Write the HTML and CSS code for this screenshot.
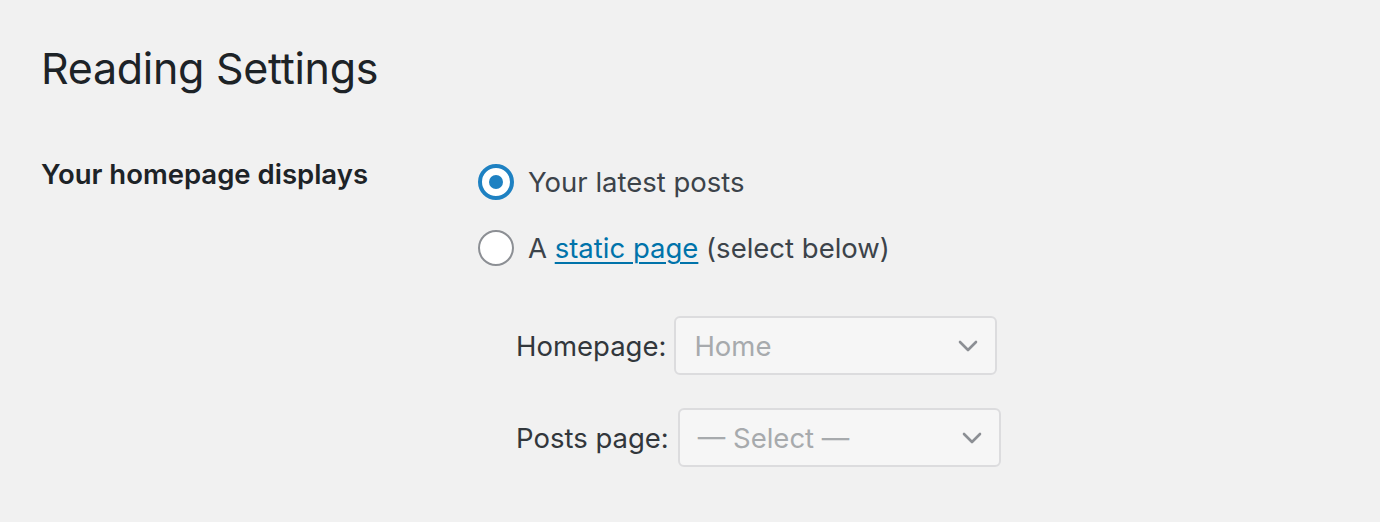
FILE: index.html
```html
<!DOCTYPE html>
<html>
<head>
<meta charset="utf-8">
<link rel="stylesheet" href="styles.css">
</head>
<body>
<div class="wrap">
  <h1 class="title">Reading Settings</h1>
  <div class="row">
    <div class="label">Your homepage displays</div>
    <div class="field">
      <label class="radio-line">
        <span class="radio checked"></span>
        <span>Your latest posts</span>
      </label>
      <label class="radio-line second">
        <span class="radio"></span>
        <span>A <a class="link" href="#">static page</a> (select below)</span>
      </label>
      <div class="sub">
        <div class="sel-row">
          <span class="sel-label">Homepage:</span>
          <div class="select"><span>Home</span><svg class="chev" viewBox="0 0 20 12" width="20" height="12"><path d="M2 2 L10 10 L18 2" fill="none" stroke="#8c8f94" stroke-width="2.6" stroke-linecap="round" stroke-linejoin="round"/></svg></div>
        </div>
        <div class="sel-row posts">
          <span class="sel-label">Posts page:</span>
          <div class="select"><span>— Select —</span><svg class="chev" viewBox="0 0 20 12" width="20" height="12"><path d="M2 2 L10 10 L18 2" fill="none" stroke="#8c8f94" stroke-width="2.6" stroke-linecap="round" stroke-linejoin="round"/></svg></div>
        </div>
      </div>
    </div>
  </div>
</div>
</body>
</html>
```
FILE: styles.css
```css
html, body {
  margin: 0;
  padding: 0;
  background: #f1f1f1;
}
body {
  font-family: Inter, "Noto Sans", "Liberation Sans", sans-serif;
  color: #3c434a;
}
.wrap {
  padding: 40px 0 0 41px;
}
.title {
  margin: 0;
  font-size: 43px;
  font-weight: 400;
  color: #1d2327;
  line-height: 56px;
  letter-spacing: -0.3px;
}
.row {
  display: flex;
  margin-top: 66px;
}
.label {
  width: 437px;
  font-size: 27.5px;
  font-weight: 600;
  color: #1d2327;
  line-height: 32px;
  margin-top: -4px;
}
.field {
  display: flex;
  flex-direction: column;
  font-size: 27.5px;
  line-height: 40px;
}
.radio-line {
  display: flex;
  align-items: center;
  gap: 14px;
  height: 40px;
}
.radio-line.second {
  margin-top: 26px;
}
.radio {
  width: 36px;
  height: 36px;
  box-sizing: border-box;
  border-radius: 50%;
  border: 2px solid #8c8f94;
  background: #fff;
  position: relative;
  flex: none;
}
.radio.checked {
  border: 4px solid #1e81c2;
}
.radio.checked::after {
  content: "";
  position: absolute;
  left: 50%;
  top: 50%;
  width: 14px;
  height: 14px;
  margin: -7px 0 0 -7px;
  border-radius: 50%;
  background: #1e81c2;
}
.link {
  color: #0073aa;
  text-decoration: underline;
  text-underline-offset: 4px;
  text-decoration-thickness: 2px;
}
.sub {
  padding-left: 38px;
  margin-top: 48px;
  display: flex;
  flex-direction: column;
  gap: 33px;
}
.sel-row {
  display: flex;
  align-items: center;
  gap: 8px;
}
.sel-row.posts {
  gap: 9px;
}
.sel-label {
  color: #32373c;
}
.select {
  width: 323px;
  height: 59px;
  box-sizing: border-box;
  border: 2px solid #dcdcde;
  border-radius: 6px;
  background: #f6f6f6;
  display: flex;
  align-items: center;
  justify-content: space-between;
  padding: 0 17px 0 18px;
  color: #a7aaad;
}
.chev {
  display: block;
}
```
